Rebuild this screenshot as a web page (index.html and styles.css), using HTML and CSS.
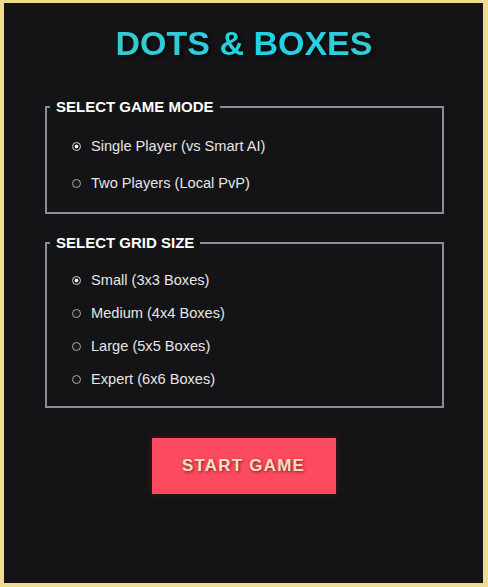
FILE: index.html
```html
<!DOCTYPE html>
<html>
<head>
<meta charset="utf-8">
<link rel="stylesheet" href="styles.css">
</head>
<body>
<div class="panel">
  <h1 class="title">DOTS &amp; BOXES</h1>
  <fieldset class="group group-mode">
    <legend class="legend">SELECT GAME MODE</legend>
    <div class="list list-mode">
      <label class="option"><input class="radio" type="radio" name="mode" checked><span>Single Player (vs Smart AI)</span></label>
      <label class="option"><input class="radio" type="radio" name="mode"><span>Two Players (Local PvP)</span></label>
    </div>
  </fieldset>
  <fieldset class="group group-size">
    <legend class="legend">SELECT GRID SIZE</legend>
    <div class="list list-size">
      <label class="option"><input class="radio" type="radio" name="size" checked><span>Small (3x3 Boxes)</span></label>
      <label class="option"><input class="radio" type="radio" name="size"><span>Medium (4x4 Boxes)</span></label>
      <label class="option"><input class="radio" type="radio" name="size"><span>Large (5x5 Boxes)</span></label>
      <label class="option"><input class="radio" type="radio" name="size"><span>Expert (6x6 Boxes)</span></label>
    </div>
  </fieldset>
  <div class="actions">
    <button class="start">START GAME</button>
  </div>
</div>
</body>
</html>
```

FILE: styles.css
```css
html, body {
  margin: 0;
  padding: 0;
}
body {
  background: #f1dc8e;
  width: 488px;
  height: 587px;
  overflow: hidden;
  font-family: "Liberation Sans", Arial, sans-serif;
}
.panel {
  box-sizing: border-box;
  margin: 3px 5px 4px 4px;
  width: 479px;
  height: 580px;
  background: #141416;
  padding: 20px 40px 0 41px;
}
.title {
  margin: 0;
  font-size: 34px;
  line-height: 40px;
  font-weight: bold;
  text-align: center;
  background: linear-gradient(90deg, #3ec6c4 0%, #22d2e6 55%, #38c9cc 100%);
  -webkit-background-clip: text;
  background-clip: text;
  color: transparent;
  filter: drop-shadow(2px 2px 2px rgba(0,0,0,0.7));
}
.group {
  margin: 35px 0 0 0;
  width: 399px;
  box-sizing: border-box;
  border: 2px solid #8e8e92;
  padding: 20px 25px 19px 25px;
  min-width: 0;
}
.group-size {
  margin-top: 20px;
  padding-top: 18px;
  padding-bottom: 17px;
}
.legend {
  margin-left: -22px;
  padding: 0 6px;
  color: #ffffff;
  font-size: 15px;
  line-height: 18px;
  font-weight: bold;
}
.list {
  display: flex;
  flex-direction: column;
}
.list-mode { gap: 17px; }
.list-size { gap: 13px; }
.option {
  display: flex;
  align-items: center;
  height: 20px;
  line-height: 20px;
  font-size: 14.6px;
  color: #e6e6e6;
}
.radio {
  -webkit-appearance: none;
  appearance: none;
  width: 9px;
  height: 9px;
  margin: 0 10px 0 0;
  border: 1px solid #a8a8a8;
  border-radius: 50%;
  background: #1a1a1c;
  box-sizing: border-box;
}
.radio:checked {
  background: radial-gradient(circle, #ffffff 0 1.6px, #1a1a1c 2.2px);
  border-color: #d0d0d0;
}
.actions {
  display: flex;
  justify-content: center;
  margin-top: 30px;
  padding-right: 1px;
}
.start {
  width: 184px;
  height: 56px;
  border: none;
  background: #fc4a5e;
  color: #f2e2c4;
  font-family: "Liberation Sans", Arial, sans-serif;
  font-size: 17px;
  font-weight: bold;
  letter-spacing: 1.2px;
  text-shadow: 1px 1px 3px rgba(90,0,20,0.7);
  box-shadow: 0 0 6px rgba(200,30,50,0.35);
}
```
